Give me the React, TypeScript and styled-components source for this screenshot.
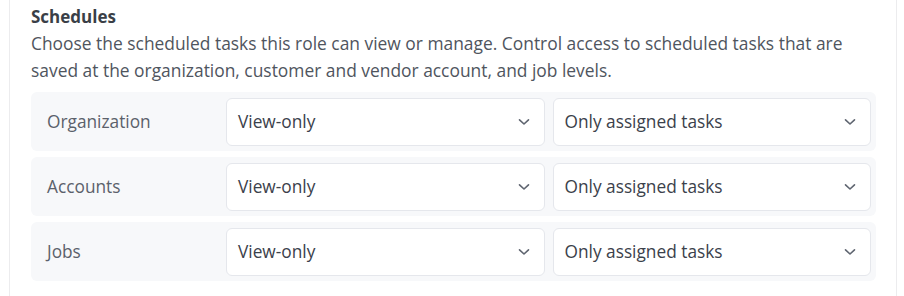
import React from "react";
import styled, { createGlobalStyle } from "styled-components";

const Global = createGlobalStyle`
  html, body { margin: 0; padding: 0; background: #ffffff; }
  body { font-family: "Open Sans", "Noto Sans", sans-serif; }
`;

const Card = styled.section`
  margin-left: 9px;
  width: 888px;
  height: 296px;
  box-sizing: border-box;
  border-left: 1px solid #ececee;
  border-right: 1px solid #ececee;
  padding: 4px 20px 0 21px;
  background: #fff;
`;

const Title = styled.h3`
  margin: 0;
  font-size: 17px;
  font-weight: 700;
  line-height: 26px;
  color: #3a3f47;
`;

const Description = styled.p`
  margin: 0 0 8px;
  font-size: 17.4px;
  line-height: 27px;
  color: #4f555e;
`;

const Rows = styled.div`
  display: flex;
  flex-direction: column;
  gap: 6px;
`;

const Row = styled.div`
  display: grid;
  grid-template-columns: 187px 1fr 1fr;
  column-gap: 8px;
  align-items: center;
  height: 59px;
  box-sizing: border-box;
  padding: 5px 5px 5px 0;
  background: #f7f8fa;
  border-radius: 6px;
`;

const Label = styled.div`
  padding-left: 16px;
  font-size: 17.3px;
  color: #5b616b;
`;

const Select = styled.div`
  height: 48px;
  box-sizing: border-box;
  display: flex;
  align-items: center;
  justify-content: space-between;
  padding: 0 14px 0 11px;
  background: #fff;
  border: 1px solid #e5e7ec;
  border-radius: 6px;
  font-size: 17.3px;
  color: #3b414b;
`;

const Chevron = () => (
  <svg width="12" height="8" viewBox="0 0 12 8" fill="none">
    <path d="M1.5 1.8 L6 6 L10.5 1.8" stroke="#5f6570" strokeWidth="1.6" strokeLinecap="round" strokeLinejoin="round" />
  </svg>
);

const rows = ["Organization", "Accounts", "Jobs"];

export default function App() {
  return (
    <>
      <Global />
      <Card>
        <Title>Schedules</Title>
        <Description>
          Choose the scheduled tasks this role can view or manage. Control access to scheduled tasks that are
          saved at the organization, customer and vendor account, and job levels.
        </Description>
        <Rows>
          {rows.map((r) => (
            <Row key={r}>
              <Label>{r}</Label>
              <Select>
                <span>View-only</span>
                <Chevron />
              </Select>
              <Select>
                <span>Only assigned tasks</span>
                <Chevron />
              </Select>
            </Row>
          ))}
        </Rows>
      </Card>
    </>
  );
}
